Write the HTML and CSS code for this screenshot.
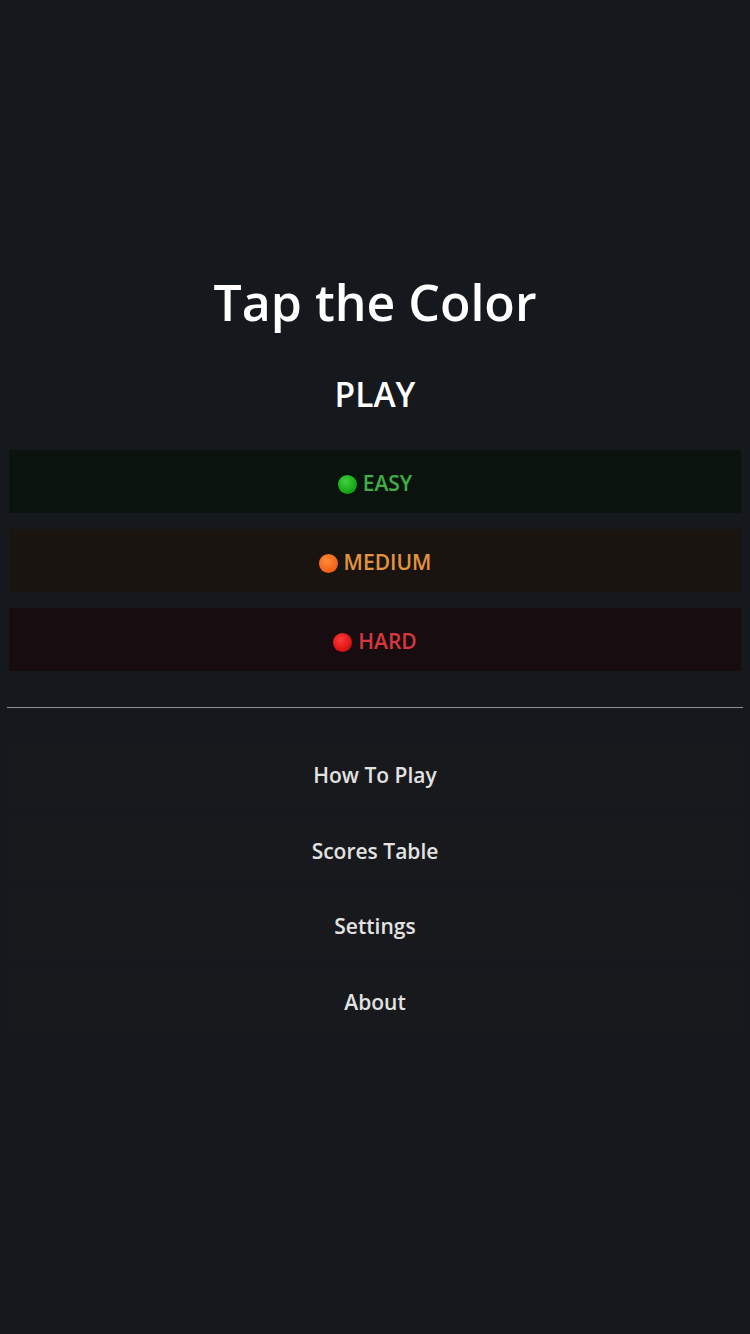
FILE: index.html
```html
<!DOCTYPE html>
<html>
<head>
<meta charset="utf-8">
<link rel="stylesheet" href="styles.css">
</head>
<body>
<main class="screen">
  <h1 class="title">Tap the Color</h1>
  <h2 class="play">PLAY</h2>
  <div class="levels">
    <div class="level easy"><span class="dot"></span>EASY</div>
    <div class="level medium"><span class="dot"></span>MEDIUM</div>
    <div class="level hard"><span class="dot"></span>HARD</div>
  </div>
  <hr class="divider">
  <nav class="menu">
    <div class="item">How To Play</div>
    <div class="item">Scores Table</div>
    <div class="item">Settings</div>
    <div class="item">About</div>
  </nav>
</main>
</body>
</html>
```

FILE: styles.css
```css
html, body {
  margin: 0;
  padding: 0;
  background: #15181d;
}
body {
  font-family: "Open Sans", "Noto Sans", sans-serif;
  width: 750px;
  height: 1334px;
}
.screen {
  display: flex;
  flex-direction: column;
  padding-top: 270px;
}
.title {
  margin: 0;
  font-size: 50px;
  line-height: 64px;
  font-weight: 600;
  color: #ffffff;
  text-align: center;
}
.play {
  margin: 40px 0 0;
  font-size: 33.5px;
  line-height: 40px;
  font-weight: 600;
  color: #ffffff;
  text-align: center;
}
.levels {
  display: flex;
  flex-direction: column;
  gap: 16px;
  margin: 36px 9px 0;
}
.level {
  height: 63px;
  box-sizing: border-box;
  padding-top: 3px;
  display: flex;
  align-items: center;
  justify-content: center;
  gap: 6px;
  font-size: 21px;
  font-weight: 600;
}
.dot {
  width: 19px;
  height: 19px;
  border-radius: 50%;
  margin-top: 3px;
}
.easy { background: #0b130e; color: #3fae45; }
.easy .dot { background: radial-gradient(circle at 40% 35%, #3dd43d 0%, #18a818 60%, #0d8a0d 100%); }
.medium { background: #19140f; color: #e39440; }
.medium .dot { background: radial-gradient(circle at 40% 35%, #ff8a3a 0%, #f5661a 60%, #d9500c 100%); }
.hard { background: #170d10; color: #d7373f; }
.hard .dot { background: radial-gradient(circle at 40% 35%, #ff3a3a 0%, #dd1515 60%, #b80b0b 100%); }
.divider {
  margin: 36px 7px 0;
  border: 0;
  height: 1px;
  background: #8c8f94;
}
.menu {
  display: flex;
  flex-direction: column;
  gap: 15.5px;
  margin: 36px 9px 0;
}
.item {
  height: 60px;
  box-sizing: border-box;
  padding-top: 2px;
  display: flex;
  align-items: center;
  justify-content: center;
  background: #18191c;
  color: #e2e2e2;
  font-size: 21px;
  font-weight: 600;
}
```
